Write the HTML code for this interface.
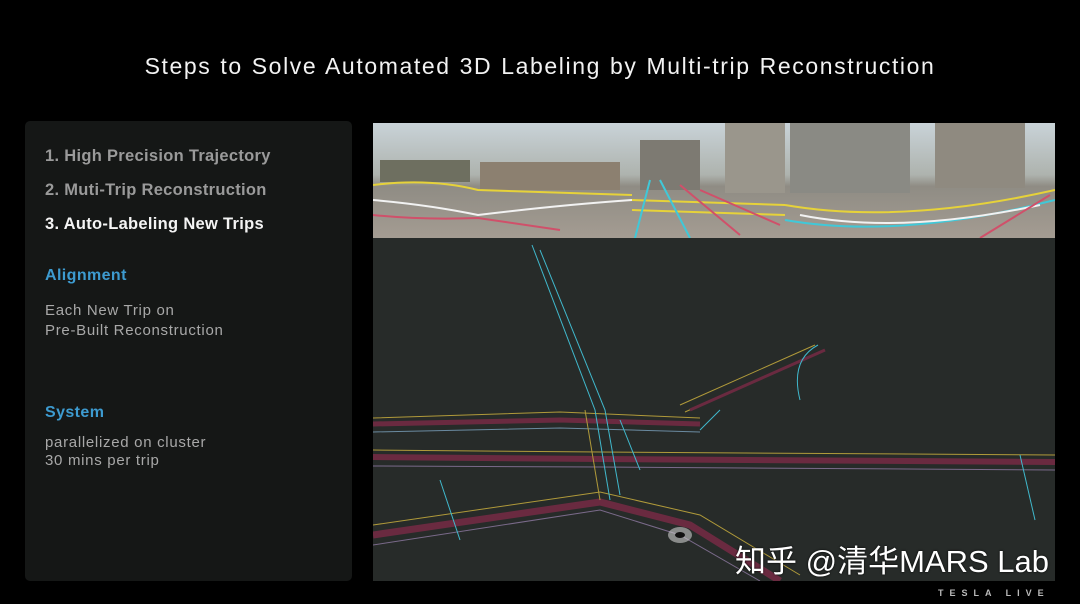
<!DOCTYPE html>
<html><head><meta charset="utf-8"><style>
body{margin:0;width:1080px;height:604px;background:#000;overflow:hidden;font-family:"Liberation Sans",sans-serif;position:relative}
.t{position:absolute;left:0;width:1080px;top:53px;text-align:center;color:#f2f2f2;font-size:23px;letter-spacing:1.6px;word-spacing:1px}
.p{position:absolute;left:25px;top:121px;width:327px;height:460px;background:#151716;border-radius:5px}
.p div{position:absolute;left:20px;white-space:nowrap}
.h{font-weight:bold;font-size:16.5px;color:#9a9a9a;letter-spacing:0.3px}
.b{color:#3d9bd0;font-weight:bold;font-size:16px;letter-spacing:0.4px}
.n{color:#a8a8a8;font-size:15px;line-height:20px;letter-spacing:0.7px}
.wm{position:absolute;left:735px;top:536px;color:#fff;font-size:31px;font-family:"Liberation Sans","Noto Sans CJK SC",sans-serif;text-shadow:0 0 2px #000}
.tl{position:absolute;left:938px;top:588px;color:#bbb;font-size:9px;letter-spacing:6px;font-weight:bold}
</style></head><body>
<div class="t">Steps to Solve Automated 3D Labeling by Multi-trip Reconstruction</div>
<div class="p">
<div class="h" style="top:26px">1. High Precision Trajectory</div>
<div class="h" style="top:60px">2. Muti-Trip Reconstruction</div>
<div class="h" style="top:94px;color:#f4f4f4">3. Auto-Labeling New Trips</div>
<div class="b" style="top:146px">Alignment</div>
<div class="n" style="top:180px">Each New Trip on<br>Pre-Built Reconstruction</div>
<div class="b" style="top:283px">System</div>
<div class="n" style="top:313px;line-height:18px">parallelized on cluster<br>30 mins per trip</div>
</div>
<svg style="position:absolute;left:373px;top:123px" width="682" height="458" viewBox="373 123 682 458">
<defs><linearGradient id="s" x1="0" y1="0" x2="0" y2="1"><stop offset="0" stop-color="#c9d3d8"/><stop offset="0.45" stop-color="#aeb3ae"/><stop offset="0.55" stop-color="#8f8c84"/><stop offset="1" stop-color="#a49c92"/></linearGradient></defs>
<rect x="373" y="123" width="682" height="458" fill="#272b29"/>
<rect x="373" y="123" width="682" height="115" fill="url(#s)"/>
<rect x="380" y="160" width="90" height="22" fill="#6e6f60"/>
<rect x="480" y="162" width="140" height="28" fill="#8c8070"/>
<rect x="640" y="140" width="60" height="50" fill="#7d7a72"/>
<rect x="725" y="123" width="60" height="70" fill="#9a968c"/>
<rect x="790" y="123" width="120" height="70" fill="#8a8a84"/>
<rect x="935" y="123" width="90" height="65" fill="#8f8a80"/>
<g fill="none" stroke-width="2">
<path d="M373 185 Q430 178 478 190 L632 195" stroke="#e6d23a"/>
<path d="M373 200 Q430 205 478 215 Q560 205 632 200" stroke="#f2f2f2"/>
<path d="M373 215 Q420 220 478 218 L560 230" stroke="#d0506a"/>
<path d="M632 210 L785 215 M632 200 L785 205" stroke="#e6d23a"/>
<path d="M660 180 L690 238 M650 180 L635 238" stroke="#40c8d8"/>
<path d="M680 185 L740 235 M700 190 L780 225" stroke="#d0506a"/>
<path d="M785 205 Q900 225 1055 190" stroke="#e6d23a"/>
<path d="M785 220 Q900 240 1055 200" stroke="#40c8d8"/>
<path d="M800 215 Q900 235 1040 205" stroke="#f2f2f2"/>
<path d="M980 238 L1050 195" stroke="#d0506a"/>
</g>
<rect x="373" y="238" width="682" height="343" fill="#272b29"/>
<g fill="none" stroke-width="1">
<path d="M373 418 L560 412 L700 418" stroke="#b09a3a"/><path d="M373 424 L560 420 L700 424" stroke="#6a2a40" stroke-width="5"/>
<path d="M373 432 L560 428 L700 432" stroke="#6a8aa0"/>
<path d="M373 450 L600 452 L1055 455" stroke="#b09a3a"/><path d="M373 457 L600 459 L1055 462" stroke="#6a2a40" stroke-width="6"/>
<path d="M373 466 L600 467 L1055 470" stroke="#7a6a8a"/>
<path d="M373 525 L600 492 L700 515 L800 575" stroke="#b09a3a"/><path d="M373 535 L600 502 L690 525 L780 581" stroke="#6a2a40" stroke-width="7"/>
<path d="M373 545 L600 510 L680 535 L760 581" stroke="#7a6a8a"/>
<path d="M532 245 L595 410 L610 500 M540 250 L605 410 L620 495" stroke="#40b8cc"/>
<path d="M585 410 L600 500" stroke="#b09a3a"/>
<path d="M680 405 L815 345 M685 412 L820 352" stroke="#b09a3a"/><path d="M690 410 L825 350" stroke="#6a2a40" stroke-width="3"/>
<path d="M818 345 Q790 360 800 400 M720 410 L700 430" stroke="#40b8cc"/>
<path d="M620 420 L640 470 M440 480 L460 540 M1020 455 L1035 520" stroke="#40b8cc"/>
</g>
<ellipse cx="680" cy="535" rx="12" ry="8" fill="#ccc" opacity="0.6"/><ellipse cx="680" cy="535" rx="5" ry="3" fill="#111"/>
</svg>
<div class="wm">知乎 @清华MARS Lab</div>
<div class="tl">TESLA LIVE</div>
</body></html>
